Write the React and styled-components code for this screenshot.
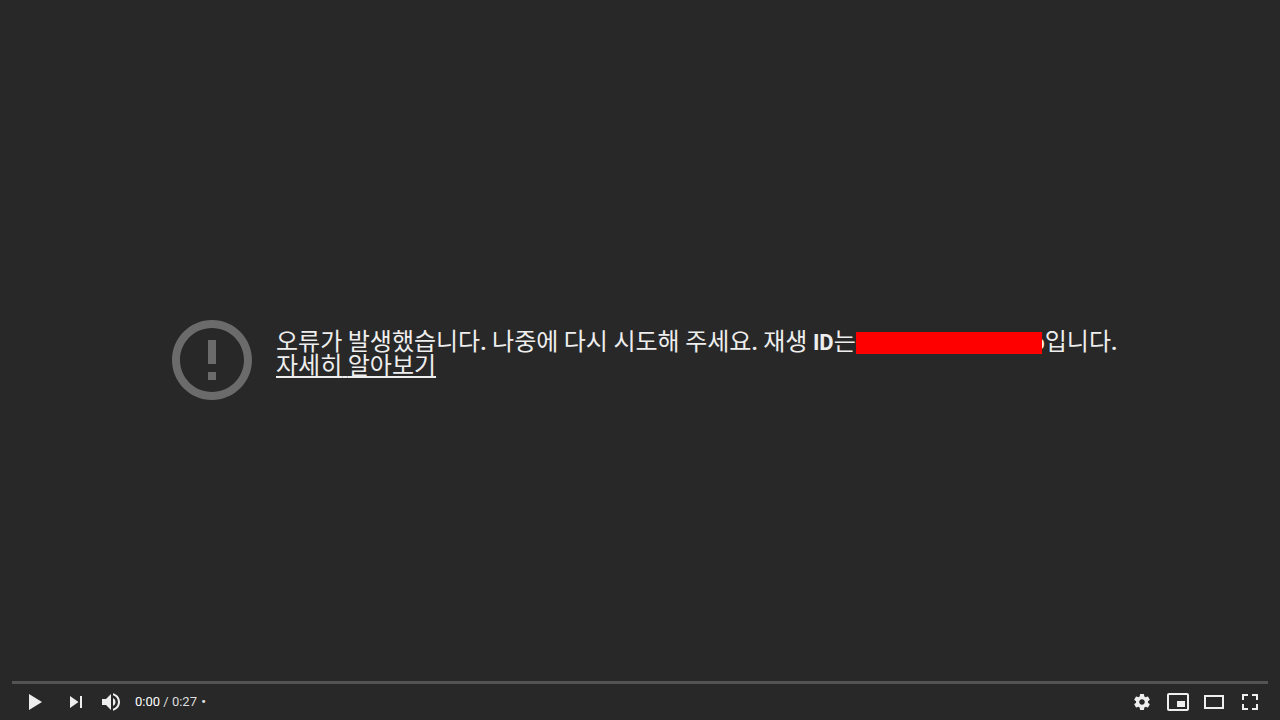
import React, { Fragment } from 'react'
import styled, { createGlobalStyle } from 'styled-components'

const GlobalStyle = createGlobalStyle`
    * {
        box-sizing: border-box;
    }

    body {
        margin: 0;
        background: #282828;
        font-family: Roboto, "Noto Sans CJK KR", sans-serif;
    }
`

const Player = styled.main`
    min-height: 100vh;
    display: flex;
    flex-direction: column;
    background: #282828;
    color: #eee;
    overflow: hidden;
`

const ErrorScreen = styled.section`
    flex: 1;
    display: flex;
    align-items: center;
    gap: 24px;
    padding: 39px 160px 0 172px;
`

const ErrorIcon = styled.svg`
    flex: none;
    width: 80px;
    height: 80px;
    fill: #6b6b6b;
`

const ErrorText = styled.div`
    padding-bottom: 10px;
    font-size: 22px;
    font-weight: 700;
    line-height: 24px;

    p {
        margin: 0;
    }

    a {
        color: inherit;
        text-decoration: underline 2px;
        text-underline-offset: 2px;
        text-decoration-skip-ink: none;
    }
`

const Word = styled.span`
    font-size: 24px;
    font-weight: 400;
    line-height: 20px;
`

const PlaybackId = styled.span`
    position: relative;
    display: inline-block;
    width: 189px;
    font-weight: 500;
    text-align: right;

    &::after {
        content: '';
        position: absolute;
        top: 1px;
        left: 0;
        width: 186px;
        height: 22px;
        background: #f00;
    }
`

const ControlBar = styled.footer`
    padding: 0 12px;
`

const ProgressBar = styled.div`
    height: 3px;
    background: #535353;
`

const Controls = styled.div`
    display: flex;
    align-items: center;
    justify-content: space-between;
    height: 36px;
`

const ControlGroup = styled.div`
    display: flex;
    align-items: center;
`

const ControlButton = styled.button`
    display: flex;
    justify-content: center;
    width: ${({ $wide }) => ($wide ? '46px' : '36px')};
    height: 36px;
    padding: 0;
    border: none;
    background: none;
    cursor: pointer;

    svg {
        width: 36px;
        height: 36px;
        fill: #eee;
        fill-rule: evenodd;
    }
`

const Time = styled.div`
    padding: 0 5px;
    font-size: 13px;
    line-height: 36px;
    color: #ddd;
    white-space: pre;

    .current {
        color: #fff;
    }

    .separator {
        margin-left: 1px;
        font-weight: 700;
    }
`

const leftControls = [
    { label: '재생', wide: true, path: 'M12,26 L25,18 L12,10 Z' },
    { label: '다음', path: 'M12,24 L20.5,18 L12,12 Z M22,12 v12 h2 V12 Z' },
    {
        label: '음소거',
        path: 'M8,21 L12,21 L17,26 L17,10 L12,15 L8,15 Z M19,14 L19,22 C20.48,21.32 21.5,19.77 21.5,18 C21.5,16.26 20.48,14.74 19,14 Z M19,11.29 C21.89,12.15 24,14.83 24,18 C24,21.17 21.89,23.85 19,24.71 L19,26.77 C23.01,25.86 26,22.28 26,18 C26,13.72 23.01,10.14 19,9.23 Z',
    },
]

const rightControls = [
    {
        label: '설정',
        path: 'm23.94,18.78c.03,-.25 .05,-.51 .05,-.78 0,-.27 -.02,-.52 -.05,-.78l1.68,-1.32c.15,-.12 .19,-.33 .09,-.51l-1.6,-2.76c-.09,-.17 -.31,-.24 -.48,-.17l-1.99,.8c-.41,-.32 -.86,-.58 -1.35,-.78l-.30,-2.12c-.02,-.19 -.19,-.33 -.39,-.33l-3.2,0c-.2,0 -.36,.14 -.39,.33l-.30,2.12c-.48,.2 -.93,.47 -1.35,.78l-1.99,-.8c-.18,-.07 -.39,0 -.48,.17l-1.6,2.76c-.10,.17 -.05,.39 .09,.51l1.68,1.32c-.03,.25 -.05,.52 -.05,.78 0,.26 .02,.52 .05,.78l-1.68,1.32c-.15,.12 -.19,.33 -.09,.51l1.6,2.76c.09,.17 .31,.24 .48,.17l1.99,-.8c.41,.32 .86,.58 1.35,.78l.30,2.12c.02,.19 .19,.33 .39,.33l3.2,0c.2,0 .36,-.14 .39,-.33l.30,-2.12c.48,-.2 .93,-.47 1.35,-.78l1.99,.8c.18,.07 .39,0 .48,-.17l1.6,-2.76c.09,-.17 .05,-.39 -.09,-.51l-1.68,-1.32z m-5.94,2.01c-1.54,0 -2.8,-1.25 -2.8,-2.8 0,-1.54 1.25,-2.8 2.8,-2.8 1.54,0 2.8,1.25 2.8,2.8 0,1.54 -1.25,2.8 -2.8,2.8z',
    },
    {
        label: '소형 플레이어',
        path: 'M25,17 L17,17 L17,23 L25,23 Z M29,25 L29,10.98 C29,9.88 28.1,9 27,9 L9,9 C7.9,9 7,9.88 7,10.98 L7,25 C7,26.1 7.9,27 9,27 L27,27 C28.1,27 29,26.1 29,25 Z M27,25.02 L9,25.02 L9,10.97 L27,10.97 Z',
    },
    { label: '영화관 모드', path: 'M28,11 v14 h-20 v-14 Z M10,13 h16 v10 h-16 Z' },
    {
        label: '전체 화면',
        path: 'M10,16 h2 v-4 h4 v-2 h-6 Z M20,10 v2 h4 v4 h2 v-6 Z M24,20 v4 h-4 v2 h6 v-6 Z M12,20 h-2 v6 h6 v-2 h-4 Z',
    },
]

function ControlList({ items }) {
    return items.map(({ label, path, wide }) => (
        <ControlButton key={label} type="button" aria-label={label} $wide={wide}>
            <svg viewBox="0 0 36 36">
                <path d={path} />
            </svg>
        </ControlButton>
    ))
}

// Hangul runs are set larger and lighter than the Latin text and punctuation
function Message({ text }) {
    return text.split(/([가-힣]+)/).map((part, i) => (
        i % 2 ? <Word key={i}>{part}</Word> : <Fragment key={i}>{part}</Fragment>
    ))
}

function App() {
    return (
        <>
            <GlobalStyle />
            <Player>
                <ErrorScreen>
                    <ErrorIcon viewBox="2 2 20 20">
                        <path d="M11 15h2v2h-2zm0-8h2v6h-2zm.99-5C6.47 2 2 6.48 2 12s4.47 10 9.99 10C17.52 22 22 17.52 22 12S17.52 2 11.99 2zM12 20c-4.42 0-8-3.58-8-8s3.58-8 8-8 8 3.58 8 8-3.58 8-8 8z" />
                    </ErrorIcon>
                    <ErrorText>
                        <p>
                            <Message text="오류가 발생했습니다. 나중에 다시 시도해 주세요. 재생 ID는" />
                            <PlaybackId>o</PlaybackId>
                            <Message text="입니다." />
                        </p>
                        <p>
                            <a href="#help"><Message text="자세히 알아보기" /></a>
                        </p>
                    </ErrorText>
                </ErrorScreen>
                <ControlBar>
                    <ProgressBar />
                    <Controls>
                        <ControlGroup>
                            <ControlList items={leftControls} />
                            <Time>
                                <span className="current">0:00</span> / 0:27<span className="separator"> •</span>
                            </Time>
                        </ControlGroup>
                        <ControlGroup>
                            <ControlList items={rightControls} />
                        </ControlGroup>
                    </Controls>
                </ControlBar>
            </Player>
        </>
    )
}

export default App
